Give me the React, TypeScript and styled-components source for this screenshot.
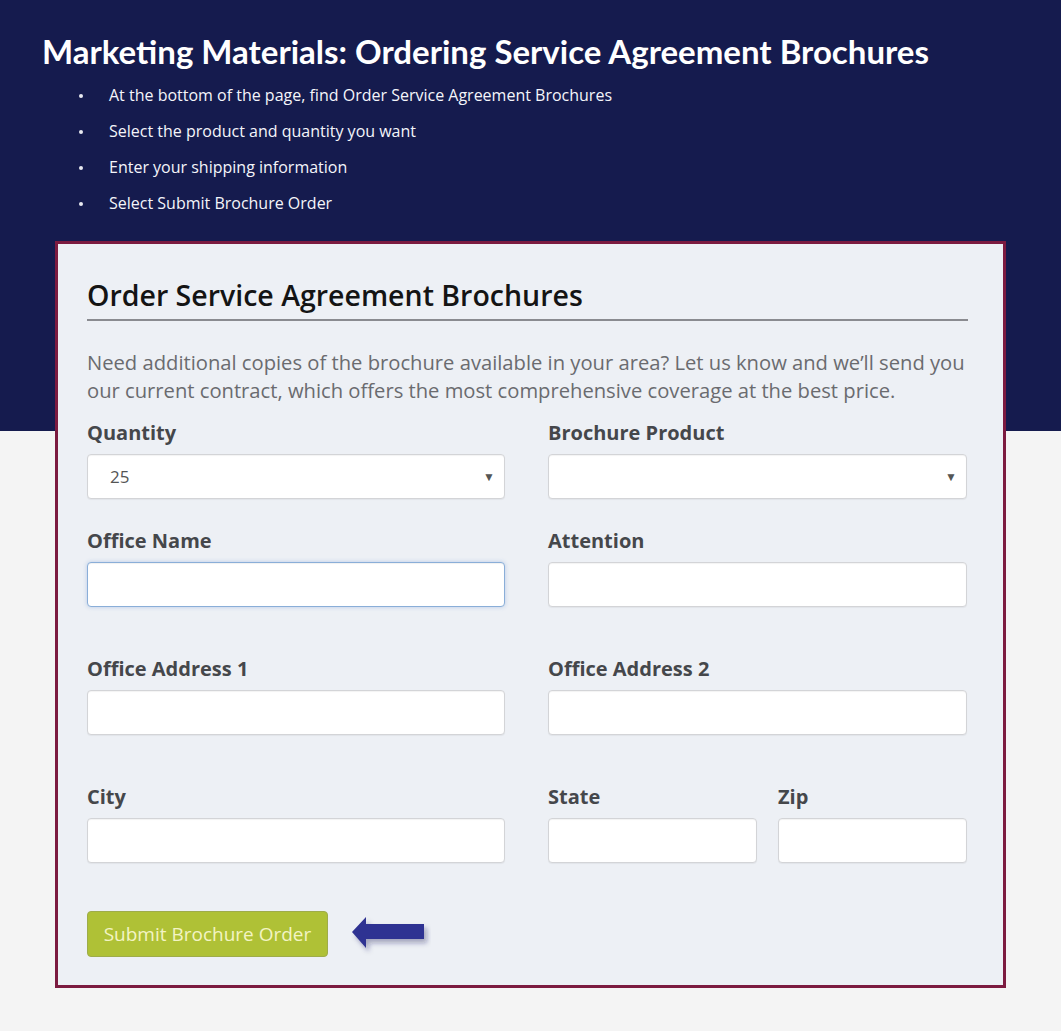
import styled, { createGlobalStyle } from "styled-components";

const GlobalStyle = createGlobalStyle`
  html, body {
    margin: 0;
    padding: 0;
  }
  body {
    font-family: "Open Sans", "Noto Sans", sans-serif;
    background-color: #f4f4f4;
    background-image: linear-gradient(#151b4e 0, #151b4e 431px, #f4f4f4 431px);
    background-repeat: no-repeat;
  }
`;

const Page = styled.div`
  padding: 31px 0 42px;
`;

const Title = styled.h1`
  margin: 0 0 6px 42px;
  font-family: Lato, "Open Sans", sans-serif;
  font-weight: 700;
  font-size: 33px;
  line-height: 40px;
  color: #ffffff;
`;

const Steps = styled.ul`
  list-style: none;
  margin: 0 0 20px;
  padding: 0 0 0 109px;
`;

const Step = styled.li`
  position: relative;
  font-size: 16px;
  line-height: 36px;
  color: #f4f5fa;

  &::before {
    content: "";
    position: absolute;
    left: -30px;
    top: 17px;
    width: 4px;
    height: 4px;
    border-radius: 50%;
    background: #e8e9f0;
  }
`;

const Card = styled.section`
  margin-left: 55px;
  width: 951px;
  box-sizing: border-box;
  border: 3px solid #7c1b40;
  background: #edf0f5;
  padding: 32px 35px 28px 29px;
`;

const Heading = styled.h2`
  margin: 0;
  padding-bottom: 5px;
  border-bottom: 2px solid #8a8b90;
  font-size: 28.5px;
  font-weight: 600;
  line-height: 38px;
  color: #141414;
`;

const Intro = styled.p`
  margin: 27px 0 15px;
  font-size: 20.2px;
  line-height: 28px;
  color: #6a6b6f;
`;

const Row = styled.div<{ $after: number }>`
  display: grid;
  grid-template-columns: 418px 419px;
  column-gap: 43px;
  margin-bottom: ${(p) => p.$after}px;
`;

const Pair = styled.div`
  display: grid;
  grid-template-columns: 209px 189px;
  column-gap: 21px;
`;

const Field = styled.label`
  display: flex;
  flex-direction: column;
  gap: 7px;
`;

const Label = styled.span`
  font-size: 20px;
  font-weight: 700;
  line-height: 28px;
  color: #45474b;
`;

const Input = styled.input<{ $focused?: boolean }>`
  box-sizing: border-box;
  height: 45px;
  width: 100%;
  padding: 0 22px;
  font-family: inherit;
  font-size: 17px;
  color: #555;
  background: #ffffff;
  border: 1px solid ${(p) => (p.$focused ? "#8aaed8" : "#d3d4d7")};
  border-radius: 4px;
  box-shadow: ${(p) =>
    p.$focused
      ? "inset 0 1px 1px rgba(0,0,0,.06), 0 0 4px rgba(120,160,215,.45)"
      : "inset 0 1px 1px rgba(0,0,0,.05), 0 1px 1px rgba(0,0,0,.05)"};
  outline: none;
`;

const SelectBox = styled.div`
  position: relative;
  box-sizing: border-box;
  height: 45px;
  display: flex;
  align-items: center;
  padding: 0 22px;
  font-size: 17px;
  color: #555;
  background: #ffffff;
  border: 1px solid #d3d4d7;
  border-radius: 4px;
  box-shadow: inset 0 1px 1px rgba(0, 0, 0, 0.05), 0 1px 1px rgba(0, 0, 0, 0.05);
`;

const Caret = styled.span`
  position: absolute;
  right: 9px;
  top: 13px;
  font-size: 12px;
  color: #555;
`;

const Actions = styled.div`
  display: flex;
  align-items: center;
  gap: 23px;
`;

const SubmitButton = styled.button`
  box-sizing: border-box;
  width: 241px;
  height: 46px;
  padding: 0;
  font-family: inherit;
  font-size: 19px;
  color: #f3f4c4;
  background: #afc136;
  border: 1px solid #9eac4a;
  border-radius: 4px;
`;

const Arrow = () => (
  <svg width="80" height="40" viewBox="0 0 80 40" style={{ marginTop: 4 }}>
    <defs>
      <filter id="arrowShadow" x="-20%" y="-30%" width="150%" height="180%">
        <feDropShadow dx="3" dy="4" stdDeviation="2.5" floodColor="#1c1f5a" floodOpacity="0.35" />
      </filter>
    </defs>
    <polygon
      points="1,16 15,1 15,8 73,8 73,23 15,23 15,32"
      fill="#2e3192"
      filter="url(#arrowShadow)"
    />
  </svg>
);

export default function App() {
  return (
    <>
      <GlobalStyle />
      <Page>
        <Title>Marketing Materials: Ordering Service Agreement Brochures</Title>
        <Steps>
          <Step>At the bottom of the page, find Order Service Agreement Brochures</Step>
          <Step>Select the product and quantity you want</Step>
          <Step>Enter your shipping information</Step>
          <Step>Select Submit Brochure Order</Step>
        </Steps>
        <Card>
          <Heading>Order Service Agreement Brochures</Heading>
          <Intro>
            Need additional copies of the brochure available in your area? Let us know and
            we’ll send you our current contract, which offers the most comprehensive coverage
            at the best price.
          </Intro>
          <Row $after={28}>
            <Field>
              <Label>Quantity</Label>
              <SelectBox>
                25
                <Caret>▼</Caret>
              </SelectBox>
            </Field>
            <Field>
              <Label>Brochure Product</Label>
              <SelectBox>
                <Caret>▼</Caret>
              </SelectBox>
            </Field>
          </Row>
          <Row $after={48}>
            <Field>
              <Label>Office Name</Label>
              <Input $focused />
            </Field>
            <Field>
              <Label>Attention</Label>
              <Input />
            </Field>
          </Row>
          <Row $after={48}>
            <Field>
              <Label>Office Address 1</Label>
              <Input />
            </Field>
            <Field>
              <Label>Office Address 2</Label>
              <Input />
            </Field>
          </Row>
          <Row $after={48}>
            <Field>
              <Label>City</Label>
              <Input />
            </Field>
            <Pair>
              <Field>
                <Label>State</Label>
                <Input />
              </Field>
              <Field>
                <Label>Zip</Label>
                <Input />
              </Field>
            </Pair>
          </Row>
          <Actions>
            <SubmitButton type="button">Submit Brochure Order</SubmitButton>
            <Arrow />
          </Actions>
        </Card>
      </Page>
    </>
  );
}
